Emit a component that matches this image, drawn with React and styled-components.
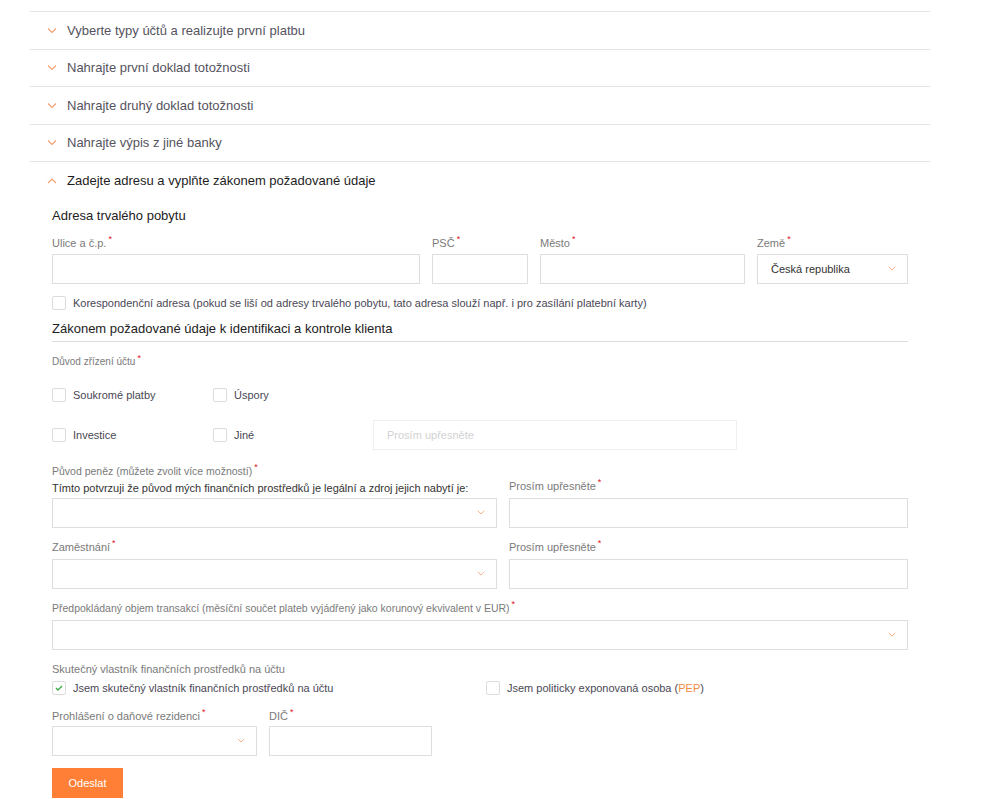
import React from 'react';
import styled, { createGlobalStyle } from 'styled-components';

const GlobalStyle = createGlobalStyle`
  body {
    margin: 0;
    background: #fff;
    font-family: "Liberation Sans", Arial, sans-serif;
  }
`;

const Page = styled.div`
  padding: 11px 64px 0 30px;
  width: 900px;
`;

const AccordionRow = styled.div`
  display: flex;
  align-items: center;
  gap: 10px;
  height: 37.5px;
  box-sizing: border-box;
  border-top: 1px solid #e4e4e4;
  padding-left: 17px;
  font-size: 13px;
  color: ${(p) => (p.$open ? '#1e1e1e' : '#55535e')};
`;

const Chevron = ({ up }) => (
  <svg width="10" height="7" viewBox="0 0 10 7">
    <path
      d={up ? 'M1 6 L5 2 L9 6' : 'M1 1.5 L5 5.5 L9 1.5'}
      fill="none"
      stroke="#f5a06e"
      strokeWidth="1.2"
    />
  </svg>
);

const Content = styled.div`
  padding: 0 22px;
`;

const Heading = styled.div`
  font-size: 13px;
  line-height: 18px;
  color: #222;
  margin-top: ${(p) => p.$top}px;
  padding-bottom: ${(p) => (p.$line ? 3 : 0)}px;
  border-bottom: ${(p) => (p.$line ? '1px solid #dcdcdc' : 'none')};
`;

const Grid = styled.div`
  display: grid;
  grid-template-columns: ${(p) => p.$cols};
  column-gap: 12px;
  margin-top: ${(p) => p.$top || 0}px;
  align-items: ${(p) => (p.$center ? 'center' : 'end')};
`;

const Field = styled.div`
  display: flex;
  flex-direction: column;
`;

const Label = styled.div`
  font-size: ${(p) => p.$size || 11}px;
  line-height: 14px;
  color: ${(p) => (p.$dark ? '#333' : '#7a7a7a')};
  margin-top: ${(p) => p.$top || 0}px;
  margin-bottom: ${(p) => (p.$bottom === undefined ? 5 : p.$bottom)}px;
  white-space: nowrap;
`;

const Star = styled.span`
  display: inline-block;
  height: 0;
  line-height: 10px;
  color: #e2121f;
  font-size: 9px;
  vertical-align: top;
  position: relative;
  top: -2px;
  margin-left: 2px;
`;

const Input = styled.div`
  box-sizing: border-box;
  height: 30px;
  border: 1px solid ${(p) => (p.$faint ? '#efefef' : '#dedede')};
  background: #fff;
  display: flex;
  align-items: center;
  justify-content: space-between;
  padding: 0 11px 0 13px;
  font-size: 11px;
  color: ${(p) => (p.$faint ? '#d2d2d2' : '#333')};
`;

const SelectArrow = () => (
  <svg width="8" height="5" viewBox="0 0 8 5">
    <path d="M0.8 0.8 L4 4 L7.2 0.8" fill="none" stroke="#f7b48c" strokeWidth="1" />
  </svg>
);

const CheckRow = styled.label`
  display: flex;
  align-items: center;
  gap: 7px;
  font-size: 11px;
  color: #4a4855;
  height: 14px;
  white-space: nowrap;
`;

const Box = styled.span`
  box-sizing: border-box;
  width: 14px;
  height: 14px;
  border: 1px solid #dcdcdc;
  border-radius: 2px;
  display: inline-flex;
  align-items: center;
  justify-content: center;
  flex: none;
`;

const Check = ({ checked }) => (
  <Box>
    {checked && (
      <svg width="8" height="6" viewBox="0 0 8 6">
        <path d="M1 3 L3 5 L7 1" fill="none" stroke="#3fae49" strokeWidth="1.4" />
      </svg>
    )}
  </Box>
);

const Pep = styled.span`
  color: #f58b3f;
`;

const Button = styled.button`
  margin-top: 12px;
  width: 71px;
  height: 30px;
  border: none;
  background: #ff7f36;
  color: #fff;
  font-family: "Liberation Sans", Arial, sans-serif;
  font-size: 11px;
  cursor: pointer;
`;

const FieldBlock = ({ label, children, size, dark, top, bottom, req = true }) => (
  <Field>
    <Label $size={size} $dark={dark} $top={top} $bottom={bottom}>
      {label}
      {req && <Star>*</Star>}
    </Label>
    {children}
  </Field>
);

const Select = ({ children }) => (
  <Input>
    <span>{children}</span>
    <SelectArrow />
  </Input>
);

const steps = [
  'Vyberte typy účtů a realizujte první platbu',
  'Nahrajte první doklad totožnosti',
  'Nahrajte druhý doklad totožnosti',
  'Nahrajte výpis z jiné banky',
];

export default function App() {
  return (
    <Page>
      <GlobalStyle />
      {steps.map((s) => (
        <AccordionRow key={s}>
          <Chevron />
          {s}
        </AccordionRow>
      ))}
      <AccordionRow $open>
        <Chevron up />
        Zadejte adresu a vyplňte zákonem požadované údaje
      </AccordionRow>
      <Content>
        <Heading $top={8}>Adresa trvalého pobytu</Heading>
        <Grid $cols="368px 96px 205px 1fr" $top={11}>
          <FieldBlock label="Ulice a č.p." bottom={4}>
            <Input />
          </FieldBlock>
          <FieldBlock label="PSČ" bottom={4}>
            <Input />
          </FieldBlock>
          <FieldBlock label="Město" bottom={4}>
            <Input />
          </FieldBlock>
          <FieldBlock label="Země" bottom={4}>
            <Select>Česká republika</Select>
          </FieldBlock>
        </Grid>
        <Grid $cols="1fr" $top={12}>
          <CheckRow>
            <Check />
            Korespondenční adresa (pokud se liší od adresy trvalého pobytu, tato adresa slouží např. i pro zasílání platební karty)
          </CheckRow>
        </Grid>
        <Heading $top={10} $line>
          Zákonem požadované údaje k identifikaci a kontrole klienta
        </Heading>
        <Label $size={10} $top={13} $bottom={0}>
          Důvod zřízení účtu<Star>*</Star>
        </Label>
        <Grid $cols="149px 148px 364px" $top={19} $center>
          <CheckRow>
            <Check />
            Soukromé platby
          </CheckRow>
          <CheckRow>
            <Check />
            Úspory
          </CheckRow>
          <span />
        </Grid>
        <Grid $cols="149px 148px 364px" $top={18} $center>
          <CheckRow>
            <Check />
            Investice
          </CheckRow>
          <CheckRow>
            <Check />
            Jiné
          </CheckRow>
          <Input $faint>Prosím upřesněte</Input>
        </Grid>
        <Label $size={10.5} $top={14} $bottom={0}>
          Původ peněz (můžete zvolit více možností)<Star>*</Star>
        </Label>
        <Grid $cols="445px 1fr">
          <FieldBlock
            label="Tímto potvrzuji že původ mých finančních prostředků je legální a zdroj jejich nabytí je:"
            dark
            top={3}
            bottom={3}
            req={false}
          >
            <Select />
          </FieldBlock>
          <FieldBlock label="Prosím upřesněte" bottom={5}>
            <Input />
          </FieldBlock>
        </Grid>
        <Grid $cols="445px 1fr" $top={12}>
          <FieldBlock label="Zaměstnání">
            <Select />
          </FieldBlock>
          <FieldBlock label="Prosím upřesněte">
            <Input />
          </FieldBlock>
        </Grid>
        <Grid $cols="1fr" $top={12}>
          <FieldBlock
            label="Předpokládaný objem transakcí (měsíční součet plateb vyjádřený jako korunový ekvivalent v EUR)"
            size={10.5}
            bottom={5}
          >
            <Select />
          </FieldBlock>
        </Grid>
        <Label $top={12} $bottom={0}>
          Skutečný vlastník finančních prostředků na účtu
        </Label>
        <Grid $cols="422px 1fr" $top={5} $center>
          <CheckRow>
            <Check checked />
            Jsem skutečný vlastník finančních prostředků na účtu
          </CheckRow>
          <CheckRow>
            <Check />
            <span>
              Jsem politicky exponovaná osoba (<Pep>PEP</Pep>)
            </span>
          </CheckRow>
        </Grid>
        <Grid $cols="205px 163px" $top={14}>
          <FieldBlock label="Prohlášení o daňové rezidenci" bottom={3}>
            <Select />
          </FieldBlock>
          <FieldBlock label="DIČ" bottom={3}>
            <Input />
          </FieldBlock>
        </Grid>
        <Button>Odeslat</Button>
      </Content>
    </Page>
  );
}
